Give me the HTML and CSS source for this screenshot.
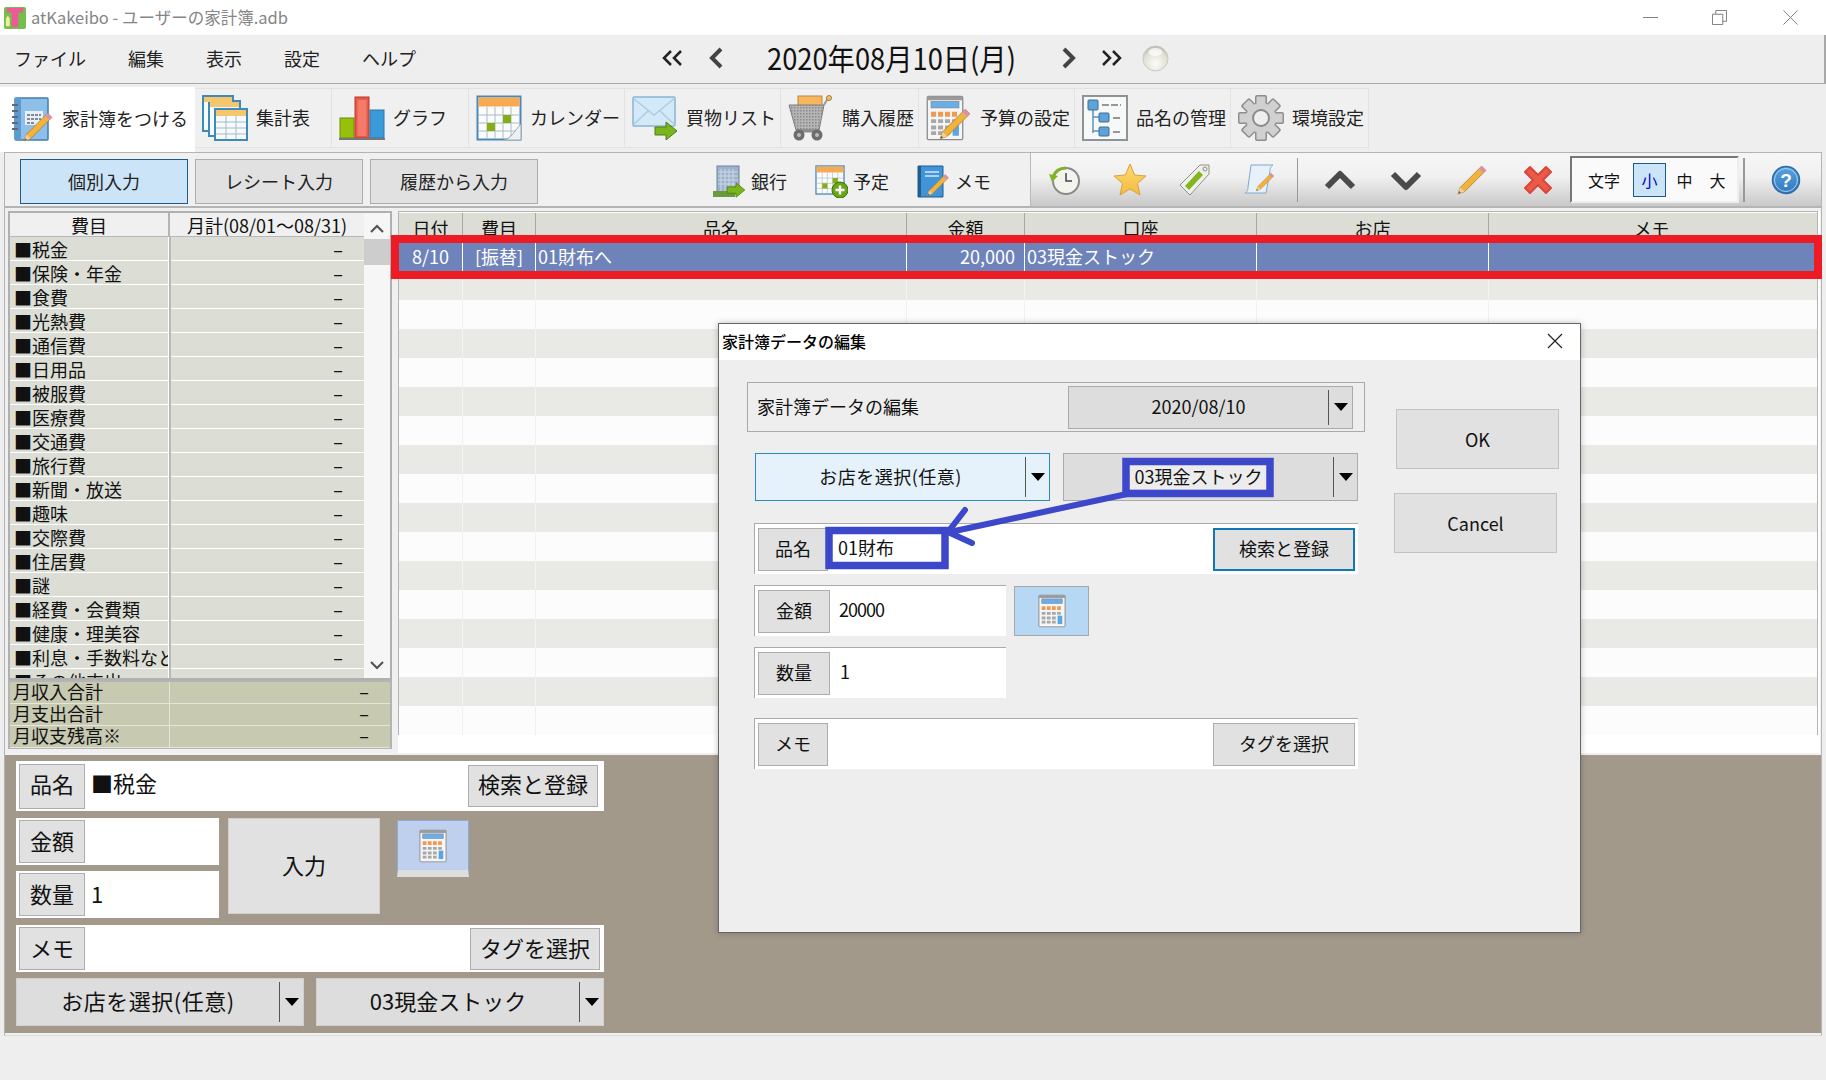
FILE: index.html
```html
<!DOCTYPE html>
<html lang="ja">
<head>
<meta charset="utf-8">
<title>atKakeibo</title>
<link rel="stylesheet" href="styles.css">
</head>
<body>
<svg class="defs" aria-hidden="true">
  <defs>
    <linearGradient id="g-toolbtn" x1="0" y1="0" x2="0" y2="1"><stop offset="0" stop-color="#5aa3e0"/><stop offset="1" stop-color="#2f79bd"/></linearGradient>
    <radialGradient id="g-orb" cx=".5" cy=".7" r=".7"><stop offset="0" stop-color="#fdfdf8"/><stop offset=".7" stop-color="#dfdfd4"/><stop offset="1" stop-color="#b5b5aa"/></radialGradient>
    <linearGradient id="g-star" x1="0" y1="0" x2="0" y2="1"><stop offset="0" stop-color="#fbdc74"/><stop offset="1" stop-color="#f6b93f"/></linearGradient>
    <pattern id="p-mesh" width="3" height="3" patternUnits="userSpaceOnUse"><rect width="3" height="3" fill="#b5b5b5"/><rect width="1.500" height="1.500" fill="#8a8a8a"/></pattern>
    <symbol id="s-pencil" viewBox="0 0 30 30">
      <path d="M24 2L28 6L8 26L2 28L4 22Z" fill="#f2b33d" stroke="#b5812a" stroke-width=".8"/>
      <path d="M24 2L28 6L25.5 8.5L21.5 4.5Z" fill="#d98fb5"/>
      <path d="M4 22L8 26L2 28Z" fill="#ecd0a6"/>
      <path d="M3 25.5L4.5 27L2 28Z" fill="#555"/>
    </symbol>
    <symbol id="s-calc" viewBox="0 0 30 36">
      <rect x="1" y="1" width="28" height="34" rx="1" fill="#f5f5f5" stroke="#8a8a8a"/>
      <rect x="1" y="1" width="28" height="3" fill="#9a9a9a"/>
      <rect x="4" y="5" width="22" height="5" fill="#69aee6" stroke="#7a8a98" stroke-width=".6"/>
      <path d="M4 15h22" stroke="#ee9a55" stroke-width="4" stroke-dasharray="4 1.5"/>
      <path d="M4 20.5h22M4 25.500h16M4 30h16" stroke="#a8a8a8" stroke-width="3" stroke-dasharray="4 1.500"/>
      <rect x="21" y="23" width="5" height="9" fill="#5ca5e4"/>
    </symbol>
    <symbol id="s-cal" viewBox="0 0 46 46">
      <rect x="1.500" y="1.500" width="43" height="43" fill="#f9fbfc" stroke="#4d87b5" stroke-width="2"/>
      <rect x="2.500" y="2.500" width="41" height="9" fill="#f6ab52"/>
      <path d="M3 20h40M3 28h40M3 36h40M11 12v32M19 12v32M27 12v32M35 12v32" stroke="#aebcc4" stroke-width="1"/>
      <rect x="11" y="28" width="8" height="8" fill="#86ae12"/>
      <rect x="27" y="20" width="8" height="8" fill="#86ae12"/>
    </symbol>
    <symbol id="s-arrow" viewBox="0 0 24 20">
      <path d="M1 6H12V1L23 10L12 19V14H1Z" fill="#7ab51d" stroke="#4f7f0e" stroke-width="1"/>
    </symbol>
  </defs>
</svg>

<div class="app">
  <header class="titlebar">
    <svg class="app-icon" viewBox="0 0 23 23"><rect width="23" height="23" rx="2" fill="#72c04a"/><path d="M3 1H20V6H15V21H8V6H3Z" fill="#ee5a96"/><path d="M2 12L4 9L6 12V20H2Z" fill="#eef0a0"/></svg>
    <span class="app-title">atKakeibo - ユーザーの家計簿.adb</span>
    <div class="winctl">
      <svg class="win-min" viewBox="0 0 16 16"><path d="M0 8H16"/></svg>
      <svg class="win-max" viewBox="0 0 16 16"><path d="M.5 4.500H11.500V15.500H.5ZM4 4.500V.5H15.500V12H11.500"/></svg>
      <svg class="win-close" viewBox="0 0 16 16"><path d="M.5 .5L15.500 15.500M15.500 .5L.5 15.500"/></svg>
    </div>
  </header>

  <nav class="menubar">
    <div class="menus"><span>ファイル</span><span>編集</span><span>表示</span><span>設定</span><span>ヘルプ</span></div>
    <div class="datenav">
      <svg class="dbl" viewBox="0 0 21 16"><path d="M9 1L2 8L9 15M19 1L12 8L19 15"/></svg>
      <svg class="sgl sgl-prev" viewBox="0 0 16 22"><path d="M13 2L4 11L13 20"/></svg>
      <span class="date">2020年08月10日(月)</span>
      <svg class="sgl sgl-next" viewBox="0 0 16 22"><path d="M3 2L12 11L3 20"/></svg>
      <svg class="dbl dbl-next" viewBox="0 0 21 16"><path d="M2 1L9 8L2 15M12 1L19 8L12 15"/></svg>
      <svg class="orb" viewBox="0 0 27 27"><circle cx="13.500" cy="13.500" r="12.500" fill="url(#g-orb)" stroke="#c9c9c0"/><ellipse cx="13.500" cy="7" rx="7" ry="4" fill="#fff" opacity=".7"/></svg>
    </div>
  </nav>

  <div class="tabs">
    <div class="tab tab-active">
      <svg viewBox="0 0 46 46">
        <rect x="7" y="1" width="33" height="42" rx="1" fill="#8ebfe8" stroke="#3f7fb3" stroke-width="1.500"/>
        <rect x="7" y="1" width="6" height="42" fill="#5c9bd0"/>
        <path d="M4 8h6M4 14h6M4 20h6M4 26h6M4 32h6" stroke="#667" stroke-width="2"/>
        <rect x="17" y="14" width="18" height="14" fill="#e6f0f8"/>
        <path d="M19 18h14M19 22h14M19 26h8" stroke="#667" stroke-width="1.500" stroke-dasharray="3 1"/>
        <use href="#s-pencil" x="14" y="14" width="32" height="32"/>
      </svg>
      <span>家計簿をつける</span>
    </div>
    <div class="tab">
      <svg viewBox="0 0 46 46">
        <g fill="#f6fafc" stroke="#3e8bb8" stroke-width="2">
          <rect x="1" y="1" width="30" height="35"/><rect x="7" y="6" width="31" height="35"/><rect x="13" y="14" width="32" height="31"/>
        </g>
        <path d="M2 2h28v5H2ZM8 7h29v5H8Z" fill="#f4c76e"/>
        <rect x="14" y="15" width="30" height="6" fill="#f4c76e"/>
        <path d="M14 27h30M14 33h30M14 39h30M24 21v23M34 21v23" stroke="#a4bbc8"/>
      </svg>
      <span>集計表</span>
    </div>
    <div class="tab">
      <svg viewBox="0 0 46 44">
        <rect x="1" y="22" width="14" height="20" fill="#97c00c" stroke="#6b8c08"/>
        <rect x="16" y="1" width="14" height="41" fill="#ec5848" stroke="#b23a2e"/>
        <rect x="18.500" y="4" width="9" height="36" fill="#f47a69"/>
        <rect x="31" y="14" width="14" height="28" fill="#3b9ad8" stroke="#2a77ab"/>
        <rect x="0" y="42" width="46" height="2" fill="#777"/>
      </svg>
      <span>グラフ</span>
    </div>
    <div class="tab">
      <svg viewBox="0 0 46 46">
        <use href="#s-cal" width="46" height="46"/>
        <path d="M45 29V45H28C36 43 38 36 45 29Z" fill="#eef1f3" stroke="#9aa4aa"/>
      </svg>
      <span>カレンダー</span>
    </div>
    <div class="tab">
      <svg viewBox="0 0 46 46">
        <rect x="1" y="2" width="42" height="29" rx="1" fill="#d3e9f8" stroke="#8ab4d2" stroke-width="1.500"/>
        <path d="M1 3L22 20L43 3M1 30L16 16M43 30L28 16" fill="none" stroke="#a9cde4" stroke-width="1.500"/>
        <use href="#s-arrow" x="22" y="26" width="24" height="20"/>
      </svg>
      <span>買物リスト</span>
    </div>
    <div class="tab">
      <svg viewBox="0 0 46 46">
        <rect x="10" y="1" width="24" height="12" fill="#f6b65c" stroke="#b9873c"/>
        <path d="M1 10H36L31 35H8Z" fill="url(#p-mesh)" stroke="#7c7c7c"/>
        <path d="M36 10L40 3" stroke="#999" stroke-width="2"/>
        <circle cx="41" cy="3" r="2.500" fill="#f3c063" stroke="#a17e3c"/>
        <path d="M8 36H32" stroke="#8c8c8c" stroke-width="3"/>
        <circle cx="11" cy="40" r="5.500" fill="#6d6d6d"/><circle cx="11" cy="40" r="2" fill="#bbb"/>
        <circle cx="29" cy="40" r="5.500" fill="#6d6d6d"/><circle cx="29" cy="40" r="2" fill="#bbb"/>
      </svg>
      <span>購入履歴</span>
    </div>
    <div class="tab">
      <svg viewBox="0 0 46 46">
        <use href="#s-calc" width="38" height="46"/>
        <use href="#s-pencil" x="12" y="12" width="34" height="34"/>
      </svg>
      <span>予算の設定</span>
    </div>
    <div class="tab">
      <svg viewBox="0 0 46 46">
        <rect x="1" y="1" width="44" height="44" fill="#f7f8f8" stroke="#8d9396" stroke-width="2"/>
        <path d="M11 12V38M11 22H17M11 36H17" fill="none" stroke="#5b93bd" stroke-width="1.500"/>
        <rect x="6" y="5" width="10" height="10" rx="1" fill="#5ea2d8" stroke="#3b6f96"/>
        <rect x="17" y="18" width="10" height="9" rx="1" fill="#5ea2d8" stroke="#3b6f96"/>
        <rect x="17" y="32" width="10" height="9" rx="1" fill="#5ea2d8" stroke="#3b6f96"/>
        <path d="M20 10H39M31 23H39M31 37H39" stroke="#777" stroke-width="1.500" stroke-dasharray="7 2"/>
      </svg>
      <span>品名の管理</span>
    </div>
    <div class="tab">
      <svg viewBox="0 0 46 46">
        <g fill="#8e8e8e">
          <rect x="17" y="0" width="12" height="46" rx="2"/><rect x="0" y="17" width="46" height="12" rx="2"/>
          <rect x="17" y="0" width="12" height="46" rx="2" transform="rotate(45 23 23)"/><rect x="17" y="0" width="12" height="46" rx="2" transform="rotate(-45 23 23)"/>
        </g>
        <g fill="#d0d0d0">
          <rect x="18.500" y="1.500" width="9" height="43" rx="1"/><rect x="1.500" y="18.500" width="43" height="9" rx="1"/>
          <rect x="18.500" y="1.500" width="9" height="43" rx="1" transform="rotate(45 23 23)"/><rect x="18.500" y="1.500" width="9" height="43" rx="1" transform="rotate(-45 23 23)"/>
          <circle cx="23" cy="23" r="15"/>
        </g>
        <circle cx="23" cy="23" r="8" fill="#eee" stroke="#8a8a8a" stroke-width="2"/>
      </svg>
      <span>環境設定</span>
    </div>
  </div>

  <main class="panel">
    <div class="toolbar">
      <div class="toolbar-left">
        <button class="mode mode-on">個別入力</button>
        <button class="mode">レシート入力</button>
        <button class="mode">履歴から入力</button>
        <div class="links">
          <div class="link">
            <svg viewBox="0 0 33 33">
              <rect x="4" y="1" width="22" height="28" fill="#9db2cc" stroke="#6f8199"/>
              <path d="M8 4v24M12 4v24M16 4v24M20 4v24M5 7h20M5 11h20M5 15h20M5 19h20" stroke="#cdd9e6"/>
              <rect x="0" y="26" width="22" height="6" fill="#6a9a3a"/>
              <use href="#s-arrow" x="13" y="17" width="20" height="16"/>
            </svg>
            <span>銀行</span>
          </div>
          <div class="link">
            <svg viewBox="0 0 33 33">
              <use href="#s-cal" width="30" height="30"/>
              <circle cx="25" cy="25" r="8" fill="#6aa518" stroke="#3f6f0a"/>
              <path d="M25 20.500v9M20.500 25h9" stroke="#fff" stroke-width="2.500"/>
            </svg>
            <span>予定</span>
          </div>
          <div class="link">
            <svg viewBox="0 0 33 33">
              <path d="M1 1H26V32H1Z" fill="#3f94da" stroke="#245c8c"/>
              <rect x="1" y="1" width="3" height="31" fill="#245c8c"/>
              <path d="M8 7H22M8 11H22" stroke="#d6e9f7" stroke-width="1.500"/>
              <use href="#s-pencil" x="9" y="8" width="24" height="24"/>
            </svg>
            <span>メモ</span>
          </div>
        </div>
      </div>
      <div class="toolbar-right">
        <div class="tool-group">
          <svg viewBox="0 0 34 34">
            <circle cx="18" cy="18" r="13" fill="#f4f4ef" stroke="#8b8b85" stroke-width="2"/>
            <path d="M18 10V18H24" fill="none" stroke="#444" stroke-width="1.500"/>
            <path d="M5 14C7 8 12 5 18 5" fill="none" stroke="#7fb428" stroke-width="3"/>
            <path d="M1 11L10 13L4 19Z" fill="#7fb428"/>
          </svg>
          <svg viewBox="0 0 34 34"><path d="M17 1L21.600 12L33 13L24.500 20.500L27 32L17 26L7 32L9.500 20.500L1 13L12.400 12Z" fill="url(#g-star)" stroke="#d9a13a"/></svg>
          <svg viewBox="0 0 34 34">
            <path d="M22 2H31V11L12 32L2 22Z" fill="#f0f0ea" stroke="#909088"/>
            <path d="M21 8L25 12L11 27L7 23Z" fill="#82b51e"/>
            <circle cx="27" cy="6" r="2" fill="none" stroke="#888"/>
          </svg>
          <svg viewBox="0 0 34 34">
            <path d="M8 2H30C27 4 27 6 27 8L23 30H2C5 28 5 26 5 24Z" fill="#e6f1fa" stroke="#7fa9cc"/>
            <use href="#s-pencil" x="12" y="9" width="20" height="20"/>
          </svg>
        </div>
        <span class="tool-sep"></span>
        <div class="tool-group tool-group-b">
          <svg class="chev" viewBox="0 0 34 34"><path d="M4 24L17 11L30 24"/></svg>
          <svg class="chev" viewBox="0 0 34 34"><path d="M4 11L17 24L30 11"/></svg>
          <svg viewBox="0 0 34 34"><use href="#s-pencil" x="1" y="1" width="32" height="32"/></svg>
          <svg viewBox="0 0 34 34"><path d="M4 9L9 4L17 12L25 4L30 9L22 17L30 25L25 30L17 22L9 30L4 25L12 17Z" fill="#ea5a48" stroke="#d6493a" stroke-width="2" stroke-linejoin="round"/></svg>
        </div>
        <div class="fontbox">
          <span class="font-label">文字</span>
          <span class="font-size font-on">小</span>
          <span class="font-size">中</span>
          <span class="font-size">大</span>
        </div>
        <span class="box-sep"></span>
        <svg class="help" viewBox="0 0 30 30"><circle cx="15" cy="15" r="13.500" fill="url(#g-toolbtn)" stroke="#2a6ca8" stroke-width="1.500"/><circle cx="15" cy="15" r="11.500" fill="none" stroke="#a8d0f0"/><text x="15" y="21.500" class="help-q">?</text></svg>
      </div>
    </div>

    <div class="content">
      <aside class="side">
        <div class="ledger">
          <div class="ledger-body">
            <div class="lhead"><span>費目</span><span>月計(08/01～08/31)</span></div>
            <div class="lrow"><span>■税金</span><span>–</span></div>
            <div class="lrow"><span>■保険・年金</span><span>–</span></div>
            <div class="lrow"><span>■食費</span><span>–</span></div>
            <div class="lrow"><span>■光熱費</span><span>–</span></div>
            <div class="lrow"><span>■通信費</span><span>–</span></div>
            <div class="lrow"><span>■日用品</span><span>–</span></div>
            <div class="lrow"><span>■被服費</span><span>–</span></div>
            <div class="lrow"><span>■医療費</span><span>–</span></div>
            <div class="lrow"><span>■交通費</span><span>–</span></div>
            <div class="lrow"><span>■旅行費</span><span>–</span></div>
            <div class="lrow"><span>■新聞・放送</span><span>–</span></div>
            <div class="lrow"><span>■趣味</span><span>–</span></div>
            <div class="lrow"><span>■交際費</span><span>–</span></div>
            <div class="lrow"><span>■住居費</span><span>–</span></div>
            <div class="lrow"><span>■謎</span><span>–</span></div>
            <div class="lrow"><span>■経費・会費類</span><span>–</span></div>
            <div class="lrow"><span>■健康・理美容</span><span>–</span></div>
            <div class="lrow"><span>■利息・手数料など</span><span>–</span></div>
            <div class="lrow"><span>■その他支出</span><span>–</span></div>
          </div>
          <div class="scroll">
            <svg class="scroll-arrow" viewBox="0 0 14 9"><path d="M1 8L7 2L13 8"/></svg>
            <div class="scroll-thumb"></div>
            <svg class="scroll-arrow scroll-down" viewBox="0 0 14 9"><path d="M1 1L7 7L13 1"/></svg>
          </div>
        </div>
        <div class="summary">
          <div class="srow"><span>月収入合計</span><span>–</span></div>
          <div class="srow"><span>月支出合計</span><span>–</span></div>
          <div class="srow"><span>月収支残高※</span><span>–</span></div>
        </div>
      </aside>

      <section class="records">
        <div class="rtable">
          <div class="rhead"><span>日付</span><span>費目</span><span>品名</span><span>金額</span><span>口座</span><span>お店</span><span>メモ</span></div>
          <div class="rrow rsel"><span class="c">8/10</span><span class="c">[振替]</span><span>01財布へ</span><span class="r">20,000</span><span>03現金ストック</span><span></span><span></span></div>
          <div class="rrow alt"><span></span><span></span><span></span><span></span><span></span><span></span><span></span></div>
          <div class="rrow"><span></span><span></span><span></span><span></span><span></span><span></span><span></span></div>
          <div class="rrow alt"><span></span><span></span><span></span><span></span><span></span><span></span><span></span></div>
          <div class="rrow"><span></span><span></span><span></span><span></span><span></span><span></span><span></span></div>
          <div class="rrow alt"><span></span><span></span><span></span><span></span><span></span><span></span><span></span></div>
          <div class="rrow"><span></span><span></span><span></span><span></span><span></span><span></span><span></span></div>
          <div class="rrow alt"><span></span><span></span><span></span><span></span><span></span><span></span><span></span></div>
          <div class="rrow"><span></span><span></span><span></span><span></span><span></span><span></span><span></span></div>
          <div class="rrow alt"><span></span><span></span><span></span><span></span><span></span><span></span><span></span></div>
          <div class="rrow"><span></span><span></span><span></span><span></span><span></span><span></span><span></span></div>
          <div class="rrow alt"><span></span><span></span><span></span><span></span><span></span><span></span><span></span></div>
          <div class="rrow"><span></span><span></span><span></span><span></span><span></span><span></span><span></span></div>
          <div class="rrow alt"><span></span><span></span><span></span><span></span><span></span><span></span><span></span></div>
          <div class="rrow"><span></span><span></span><span></span><span></span><span></span><span></span><span></span></div>
          <div class="rrow alt"><span></span><span></span><span></span><span></span><span></span><span></span><span></span></div>
          <div class="rrow"><span></span><span></span><span></span><span></span><span></span><span></span><span></span></div>
        </div>
      </section>
    </div>

    <div class="entry">
      <div class="entry-col">
        <div class="efield efield-top">
          <span class="elabel">品名</span>
          <span class="evalue">■税金</span>
          <button class="ebtn">検索と登録</button>
        </div>
        <div class="emid">
          <div class="estack">
            <div class="efield"><span class="elabel">金額</span></div>
            <div class="efield"><span class="elabel">数量</span><span class="evalue">1</span></div>
          </div>
          <button class="ebig">入力</button>
          <button class="ecalc"><svg viewBox="0 0 30 36"><use href="#s-calc" width="30" height="36"/></svg></button>
        </div>
        <div class="efield">
          <span class="elabel">メモ</span>
          <span class="evalue"></span>
          <button class="ebtn ebtn-tag">タグを選択</button>
        </div>
        <div class="eselects">
          <div class="select eselect"><span class="select-text spaced">お店を選択(任意)</span><span class="select-arrow"></span></div>
          <div class="select eselect"><span class="select-text">03現金ストック</span><span class="select-arrow"></span></div>
        </div>
      </div>
    </div>
  </main>
  <footer class="status"></footer>

  <div class="highlight-row"></div>

  <div class="dialog">
    <div class="dlg-title">
      <span>家計簿データの編集</span>
      <svg class="dlg-close" viewBox="0 0 16 16"><path d="M1 1L15 15M15 1L1 15"/></svg>
    </div>
    <div class="dlg-body">
      <div class="dlg-main">
        <div class="dlg-head">
          <span>家計簿データの編集</span>
          <div class="select dselect-date"><span class="select-text">2020/08/10</span><span class="select-arrow"></span></div>
        </div>
        <div class="dlg-selects">
          <div class="select dselect dselect-on"><span class="select-text spaced">お店を選択(任意)</span><span class="select-arrow"></span></div>
          <div class="select dselect"><span class="select-text"><span class="hl">03現金ストック</span></span><span class="select-arrow"></span></div>
        </div>
        <div class="dfield dfield-name">
          <span class="dlabel">品名</span>
          <span class="dvalue">01財布</span>
          <button class="dbtn dbtn-focus">検索と登録</button>
        </div>
        <div class="dfield dfield-short dfield-amount">
          <span class="dlabel dlabel-wide">金額</span>
          <span class="dvalue tight">20000</span>
          <button class="dcalc"><svg viewBox="0 0 30 36"><use href="#s-calc" width="30" height="36"/></svg></button>
        </div>
        <div class="dfield dfield-short">
          <span class="dlabel dlabel-wide">数量</span>
          <span class="dvalue">1</span>
        </div>
        <div class="dfield dfield-memo">
          <span class="dlabel">メモ</span>
          <span class="dvalue"></span>
          <button class="dbtn">タグを選択</button>
        </div>
      </div>
      <div class="dlg-actions">
        <button class="act act-ok">OK</button>
        <button class="act act-cancel">Cancel</button>
      </div>
    </div>
  </div>

  <svg class="annot" viewBox="0 0 1826 1080" aria-hidden="true">
    <rect x="829" y="530.500" width="116" height="35" />
    <rect x="1126" y="461.500" width="144" height="32" />
    <path d="M1127 494L950 532M965 510L948 532L972 543"/>
  </svg>
</div>
</body>
</html>
```
FILE: styles.css
```css
* { box-sizing: border-box; }
html, body { margin: 0; padding: 0; }
body {
  width: 1826px;
  height: 1080px;
  overflow: hidden;
  background: #eee;
  color: #111;
  font-family: "Noto Sans CJK JP", "Noto Sans", sans-serif;
  font-size: 18px;
}
button { font: inherit; color: inherit; padding: 0; }
.defs { position: absolute; width: 0; height: 0; }
.app { position: relative; width: 1826px; height: 1080px; overflow: hidden; }

/* title bar */
.titlebar { height: 35px; background: #fff; display: flex; align-items: center; padding-left: 4px; }
.app-icon { width: 22px; height: 22px; }
.app-title { margin-left: 5px; color: #858585; font-size: 16.500px; line-height: 35px; }
.winctl { margin-left: auto; display: flex; align-items: center; }
.winctl svg { width: 15px; height: 15px; fill: none; stroke: #7a7a7a; stroke-width: 1; }
.win-max { margin-left: 54px; }
.win-close { margin-left: 56px; margin-right: 28px; }

/* menu */
.menubar { height: 49px; display: flex; align-items: center; background: #eee; border-bottom: 1px solid #a8a8a8; border-right: 2px solid #a8a8a8; padding: 0 0 2px 14px; }
.menus { display: flex; flex: none; gap: 42px; line-height: 44px; color: #222; white-space: nowrap; }
.datenav { margin-left: 246px; display: flex; align-items: center; }
.dbl { width: 21px; height: 16px; fill: none; stroke: #222; stroke-width: 2.5; }
.sgl { width: 16px; height: 22px; fill: none; stroke: #444; stroke-width: 4; }
.sgl-prev { margin-left: 25px; }
.date { margin: 0 0 3px 43px; width: 248px; font-size: 30px; line-height: 40px; color: #111; white-space: nowrap; transform: scaleX(.91); transform-origin: left center; }
.sgl-next { margin-left: 46px; }
.dbl-next { margin-left: 24px; }
.orb { width: 27px; height: 27px; margin-left: 20px; }

/* tabs */
.tabs { height: 68px; display: flex; padding-top: 4px; }
.tab { height: 60px; min-width: 137px; display: flex; align-items: center; gap: 8px; padding: 0 4px 0 7px; background: #f0f0f0; border: 1px solid #e2e2e2; border-left: 0; color: #222; white-space: nowrap; }
.tab svg { width: 46px; height: 46px; flex: none; }
.tab-active { height: 65px; width: 195px; margin-top: -1px; padding-left: 8px; background: #fff; border: 0; gap: 8px; }
.tabs .tab span { line-height: 1; padding-bottom: 3px; }

/* panel */
.panel { margin: 0 4px; height: 884px; border: 1px solid #b4b4b4; border-bottom-color: #dcdcdc; background: #f0f0f0; display: flex; flex-direction: column; }

/* toolbar */
.toolbar { height: 55px; display: flex; border-bottom: 2px solid #b4b4b4; flex: none; }
.toolbar-left { width: 1025px; display: flex; align-items: flex-start; padding: 6px 0 0 15px; gap: 7px; }
.mode { width: 168px; height: 45px; background: #e1e1e1; border: 1px solid #adadad; color: #222; padding-bottom: 2px; }
.mode-on { background: #cce4f7; border-color: #1c5c8c; }
.links { margin-left: 168px; display: flex; gap: 28px; }
.link { display: flex; align-items: center; gap: 5px; height: 44px; color: #222; }
.link svg { width: 33px; height: 33px; }
.toolbar-right { flex: 1; display: flex; align-items: center; padding-left: 17px; border-left: 1px solid #bbb; background: linear-gradient(#f6f6f6, #f0f0f0 45%, #c9c9c9); }
.tool-group { display: flex; gap: 31px; }
.tool-group svg { width: 34px; height: 34px; }
.tool-sep { width: 1px; height: 44px; margin-left: 20px; background: #999; }
.tool-group-b { margin-left: 25px; gap: 32px; }
.chev { fill: none; stroke: #4a4a4a; stroke-width: 6; stroke-linejoin: round; }
.fontbox { width: 169px; height: 47px; margin-left: 15px; display: flex; align-items: center; padding-left: 16px; background: #fafafa; border: 2px solid #eee; border-top-color: #777; border-left-color: #777; font-size: 16px; }
.font-label { width: 34px; }
.font-size { width: 33px; height: 34px; display: flex; align-items: center; justify-content: center; }
.font-on { margin: 0 2px 0 11px; background: #cce4f7; border: 1px solid #1c5c8c; color: #0000d0; }
.box-sep { width: 2px; height: 44px; margin-left: 4px; background: #999; }
.help { width: 30px; height: 30px; margin-left: 26px; }
.help-q { font-family: "Liberation Sans", sans-serif; font-size: 19px; font-weight: 700; fill: #fff; text-anchor: middle; }

/* content */
.content { height: 545px; flex: none; display: flex; padding: 3px 0 0 3px; gap: 6px; }
.side { width: 384px; flex: none; margin-bottom: 3px; }
.ledger { height: 469px; border: 2px solid #b0b0b0; display: flex; background: #f6f6f6; }
.ledger-body { width: 354px; overflow: hidden; flex: none; }
.lhead { height: 24px; display: grid; grid-template-columns: 160px 194px; background: #f0f0f0; border-bottom: 1px solid #b8b8b8; text-align: center; line-height: 24px; white-space: nowrap; }
.lhead span:first-child { border-right: 2px solid #b4b4b4; }
.lrow { height: 24px; display: grid; grid-template-columns: 158px 3px 193px; background: #dcded5; border-bottom: 1px solid #fff; line-height: 25px; }
.lrow span { white-space: nowrap; }
.lrow span:first-child { grid-column: 1; padding-left: 4px; overflow: hidden; }
.lrow span:last-child { grid-column: 3; text-align: right; padding-right: 21px; }
.lrow::before { content: ""; grid-column: 2; grid-row: 1; background: #b8b8b8; box-shadow: inset 1px 0 #fff; height: 24px; }
.scroll { flex: 1; position: relative; background: #f6f6f6; display: flex; flex-direction: column; align-items: center; }
.scroll-arrow { width: 14px; height: 9px; margin-top: 11px; fill: none; stroke: #555; stroke-width: 2.2; flex: none; }
.scroll-thumb { width: 100%; height: 26px; margin-top: 6px; background: #cdcdcd; }
.scroll-down { margin-top: auto; margin-bottom: 8px; }
.summary { height: 69px; border: 2px solid #b4b4b4; border-top-width: 2px; background: #c8c9b1; margin-top: 0; }
.srow { height: 22px; display: grid; grid-template-columns: 160px 1fr; border-bottom: 1px solid #e6e6da; line-height: 19px; }
.srow span:first-child { padding-left: 3px; border-right: 1px solid #e6e6da; }
.srow span:last-child { text-align: right; padding-right: 21px; }
.records { flex: 1; background: #fff; margin-right: 1px; }
.rtable { width: 1420px; height: 524px; border: 1px solid #b4b4b4; background: #fcfcfc; padding-top: 1px; }
.rhead, .rrow { display: grid; grid-template-columns: 64px 73px 371px 118px 232px 232px 325px; }
.rhead { height: 29px; background: #dcded5; text-align: center; line-height: 31px; overflow: hidden; }
.rhead span { border-right: 1px solid #a8a8a0; height: 29px; }
.rhead span:last-child { border-right: 0; }
.rrow { height: 29px; background: #fcfcfc; }
.rrow span { border-right: 1px solid #f0f0f0; white-space: nowrap; }
.rrow span:last-child { border-right: 0; }
.alt { background: #e9e9e5; }
.alt span { border-right-color: #f4f4f0; }
.rsel { background: #6f83bb; color: #fff; line-height: 28px; }
.rsel span { border-right-color: #fff; padding: 0 2px; }
.rsel .c { text-align: center; }
.rsel .r { text-align: right; padding-right: 9px; }

/* entry form */
.entry { flex: 1; margin: 2px 0 2px; background: #a2998b; padding: 6px 0 0 11px; }
.entry-col { width: 588px; display: flex; flex-direction: column; font-size: 22px; }
.efield { height: 47px; display: flex; align-items: center; background: #fff; padding-left: 3px; }
.efield-top { height: 50px; }
.elabel { width: 66px; height: 43px; flex: none; display: flex; align-items: center; justify-content: center; background: #e1e1e1; border: 1px solid #adadad; padding-bottom: 4px; }
.evalue { flex: 1; padding: 0 0 4px 6px; line-height: 40px; }
.ebtn { width: 130px; height: 42px; margin-right: 6px; background: #e1e1e1; border: 1px solid #adadad; padding-bottom: 4px; }
.efield-top .elabel { height: 45px; padding-bottom: 7px; }
.efield-top .evalue { padding-bottom: 8px; }
.efield-top .ebtn { padding-bottom: 7px; }
.ebtn-tag { margin-right: 4px; }
.emid { display: flex; margin-top: 7px; margin-bottom: 7px; align-items: flex-start; }
.estack { width: 203px; display: flex; flex-direction: column; gap: 6px; }
.ebig { width: 152px; height: 96px; margin-left: 9px; background: #e1e1e1; border: 1px solid #d0d0d0; padding-bottom: 4px; }
.ecalc { width: 72px; height: 57px; margin-left: 17px; margin-top: 2px; background: #bfd0ee; border: 1px solid #8fa8d8; border-bottom: 7px solid #ddd; display: flex; align-items: center; justify-content: center; }
.ecalc svg { width: 28px; height: 42px; }
.eselects { display: flex; gap: 12px; margin-top: 6px; }
.select { display: flex; align-items: center; background: #ddd; border: 1px solid #d0d0d0; }
.select-text { flex: 1; text-align: center; white-space: nowrap; padding-bottom: 2px; }
.spaced { letter-spacing: .5px; }
.entry .select-text { padding-bottom: 4px; }
.select-arrow { flex: none; width: 24px; height: calc(100% - 6px); border-left: 1px solid #555; display: flex; align-items: center; justify-content: center; }
.select-arrow::after { content: ""; border: 7px solid transparent; border-top: 8px solid #000; border-bottom: 0; }
.eselect { width: 288px; height: 48px; }

/* dialog */
.dialog { position: absolute; left: 718px; top: 323px; width: 863px; height: 610px; background: #eee; border: 1px solid #666; box-shadow: 0 0 6px rgba(0,0,0,.25); display: flex; flex-direction: column; }
.dlg-title { height: 36px; flex: none; background: #fff; display: flex; align-items: center; padding: 0 17px 2px 3px; font-size: 16px; font-weight: 500; color: #000; }
.dlg-close { margin-left: auto; width: 16px; height: 16px; fill: none; stroke: #222; stroke-width: 1.2; }
.dlg-body { flex: 1; display: flex; }
.dlg-main { width: 648px; padding: 22px 0 0 28px; }
.dlg-head { width: 618px; height: 50px; display: flex; align-items: center; padding-left: 9px; border: 1px solid #aaa; }
.dlg-head > span { flex: 1; padding-bottom: 2px; }
.dselect-date { width: 285px; height: 43px; margin-right: 11px; border-color: #aaa; }
.dlg-selects { display: flex; gap: 13px; margin: 21px 0 0 8px; }
.dselect { width: 295px; height: 48px; border-color: #aaa; }
.dselect-on { background: #e5f1fb; border-color: #2b8ab8; }
.hl { display: inline-block; padding: 0 7px; line-height: 25px; background: #ececec; }
.dfield { width: 604px; height: 51px; margin: 11px 0 0 7px; display: flex; align-items: center; padding-left: 3px; background: #fff; border-top: 1px solid #aaa; border-left: 1px solid #aaa; }
.dfield-name { margin-top: 22px; }
.dfield-short { width: 252px; overflow: visible; }
.dfield-memo { margin-top: 20px; }
.dlabel { width: 70px; height: 43px; flex: none; display: flex; align-items: center; justify-content: center; background: #e1e1e1; border: 1px solid #adadad; padding-bottom: 2px; }
.dlabel-wide { width: 72px; }
.dvalue { flex: 1; padding: 0 0 4px 10px; white-space: nowrap; }
.tight { letter-spacing: -1px; padding-left: 9px; }
.dbtn { width: 142px; height: 43px; margin-right: 3px; background: #e1e1e1; border: 1px solid #adadad; padding-bottom: 2px; }
.dbtn-focus { border: 2px solid #1277b4; }
.dcalc { width: 75px; height: 50px; flex: none; margin-right: -83px; background: #b7d8f5; border: 1px solid #a8a8a8; display: flex; align-items: center; justify-content: center; }
.dcalc svg { width: 28px; height: 34px; }
.dlg-actions { display: flex; flex-direction: column; padding-top: 49px; }
.act { height: 60px; width: 163px; background: #e1e1e1; border: 1px solid #c2c2c2; }
.act-ok { margin-left: 29px; }
.act-cancel { margin-left: 27px; margin-top: 24px; }

/* annotations */
.highlight-row { position: absolute; left: 391px; top: 235px; width: 1431px; height: 44px; border: 8px solid #ed1c24; }
.annot { position: absolute; left: 0; top: 0; width: 1826px; height: 1080px; pointer-events: none; fill: none; stroke: #3d47c9; stroke-width: 7.5; }
.annot path { stroke-width: 6; stroke-linecap: round; stroke-linejoin: round; }

.status { height: 43px; background: #eee; }
```
